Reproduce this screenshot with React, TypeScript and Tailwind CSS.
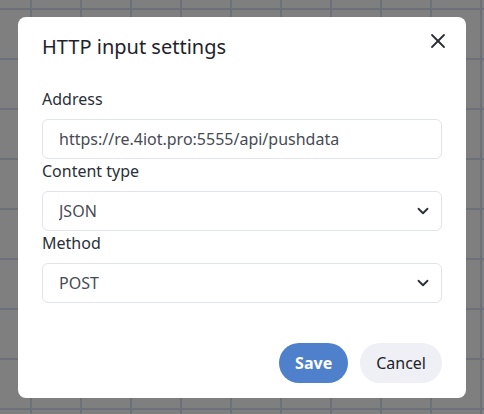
import React from 'react';
import { X, ChevronDown } from 'lucide-react';

const App: React.FC = () => {
  return (
    <div className="w-full h-[414px] flex items-center justify-center bg-[#7f7f7f] bg-[linear-gradient(to_right,#6c7079_2px,transparent_2px),linear-gradient(to_bottom,#6c7079_2px,transparent_2px)] bg-[size:50px_50px] bg-[position:30px_8px]">
      {/* dialog */}
      <div className="relative w-[448px] rounded-lg bg-white flex flex-col font-['Noto_Sans',sans-serif]">
        <button className="absolute top-3 right-4 text-[#2a2e36]" aria-label="Close">
          <X size={24} strokeWidth={1.8} />
        </button>

        {/* header */}
        <div className="px-6 pt-4">
          <h2 className="text-[20px] leading-7 font-normal text-[#1f232b]">HTTP input settings</h2>
        </div>

        {/* body */}
        <div className="px-6 pt-[26px] flex flex-col">
          <label className="h-6 mb-2 text-[16px] leading-6 text-[#2b2f38]">Address</label>
          <input
            type="text"
            defaultValue="https://re.4iot.pro:5555/api/pushdata"
            className="h-10 w-full rounded-md border border-[#e1e3ee] px-4 text-[16px] text-[#474b55] outline-none"
          />

          <label className="h-6 mb-2 text-[16px] leading-6 text-[#2b2f38]">Content type</label>
          <div className="relative">
            <select
              defaultValue="JSON"
              className="appearance-none h-10 w-full rounded-md border border-[#e1e3ee] bg-white px-4 text-[16px] text-[#474b55] outline-none"
            >
              <option>JSON</option>
              <option>Text</option>
            </select>
            <ChevronDown size={18} strokeWidth={2.4} className="absolute right-[10px] top-[11px] text-[#2a2e36] pointer-events-none" />
          </div>

          <label className="h-6 mb-2 text-[16px] leading-6 text-[#2b2f38]">Method</label>
          <div className="relative">
            <select
              defaultValue="POST"
              className="appearance-none h-10 w-full rounded-md border border-[#e1e3ee] bg-white px-4 text-[16px] text-[#474b55] outline-none"
            >
              <option>POST</option>
              <option>PUT</option>
            </select>
            <ChevronDown size={18} strokeWidth={2.4} className="absolute right-[10px] top-[11px] text-[#2a2e36] pointer-events-none" />
          </div>
        </div>

        {/* footer */}
        <div className="flex justify-end gap-3 px-6 pt-10 pb-[15px]">
          <button className="h-10 rounded-full bg-[#4f80cb] px-4 text-[16px] font-bold text-white">Save</button>
          <button className="h-10 rounded-full bg-[#eef0f5] px-4 text-[16px] text-[#1f232b]">Cancel</button>
        </div>
      </div>
    </div>
  );
};

export default App;
